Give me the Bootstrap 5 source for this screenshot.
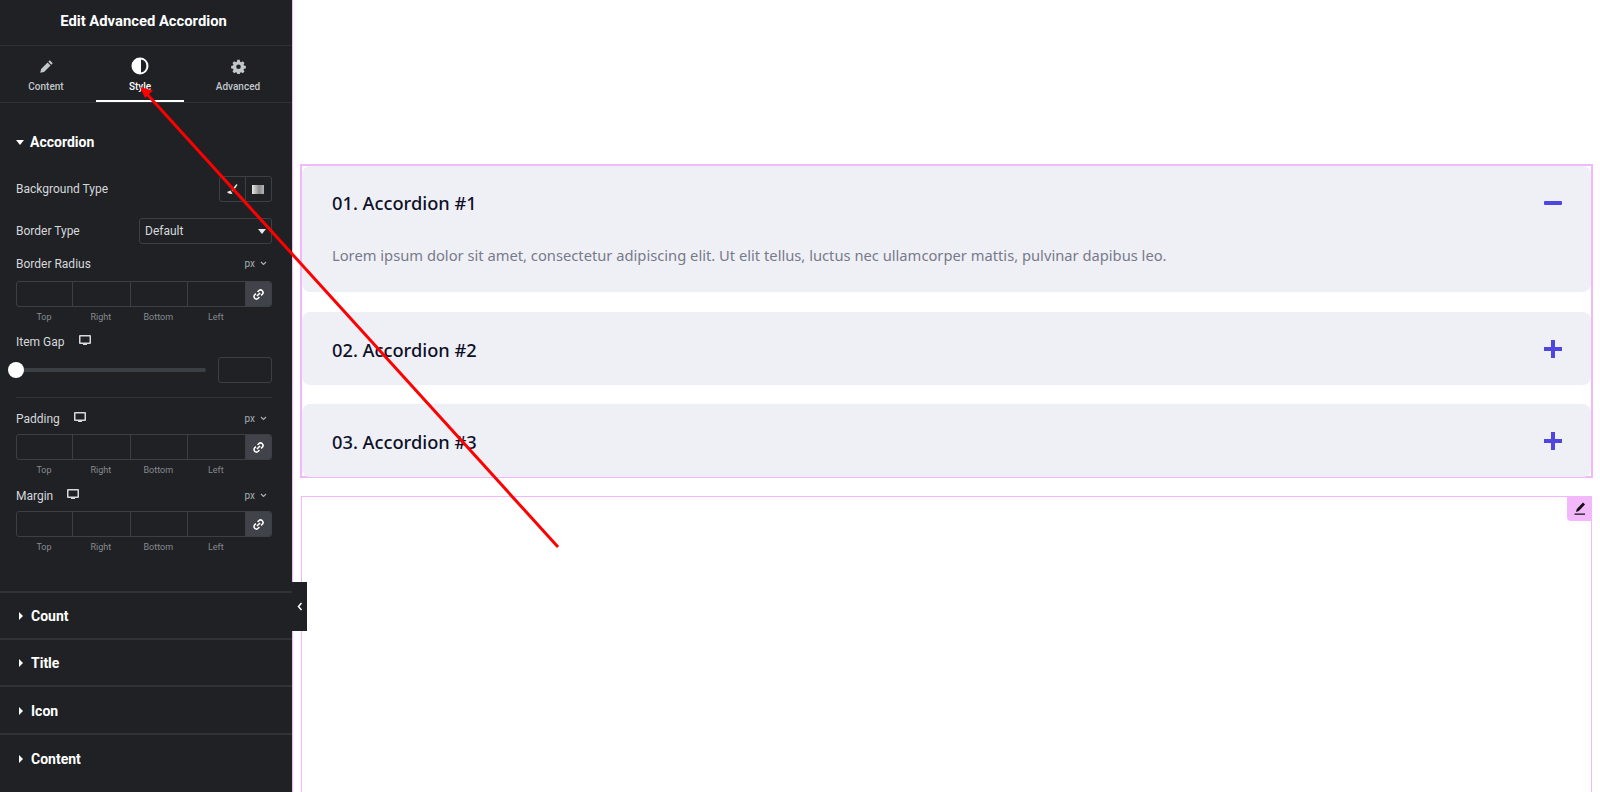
<!DOCTYPE html>
<html lang="en"><head><meta charset="utf-8"><title>Edit Advanced Accordion</title>
<link rel="stylesheet" href="https://cdn.jsdelivr.net/npm/bootstrap@5.3.0/dist/css/bootstrap.min.css">
<style>
html,body{height:792px;overflow:hidden;background:#fff}
body{font-family:Roboto,"Liberation Sans",sans-serif}
.side{width:292px;height:792px;background:#1f2124;color:#d5d8dc;flex:none}
.side-head{height:46px;border-bottom:1px solid #2e3034;font-size:14.8px;font-weight:700;color:#fff;padding:12px 5px 0 0;line-height:18px;text-align:center}
.side-tabs{height:57px;border-bottom:1px solid #303236}
.side-tab{padding-top:11px;text-align:center;font-size:10px;font-weight:500;color:#c2c7cc;line-height:12px;height:56px}
.side-tab.t1{width:92px}
.side-tab.t3{width:108px}
.side-tab svg{display:block;margin:0 auto 6px;height:18px;width:18px;fill:currentColor}
.side-tab.t1 svg,.side-tab.t3 svg{height:15px;width:15px;margin:2px auto 7px}
.side-tab.on{color:#fff;border-bottom:2px solid #fff;width:88px;margin-left:4px}
.sec-open{height:490px;padding:0 20px 0 16px;border-bottom:2px solid #303236;font-size:12px;color:#d5d8dc}
.sec-title{font-size:14px;font-weight:700;color:#fff;line-height:18px}
.sec-open>.sec-title{padding-top:30px;height:55px;margin-bottom:18px}
.caret-d{width:0;height:0;border:4px solid transparent;border-top:5px solid #fff;border-bottom:0;margin:0 6px 0 0;display:inline-block;vertical-align:2px}
.caret-r{width:0;height:0;border:4px solid transparent;border-left:4.5px solid #fff;border-right:0;margin:0 8px 0 3px;display:inline-block;vertical-align:1px}
.ctl-row{height:26px;margin-bottom:16px}
.ctl-row.tight{margin-bottom:12px}
.seg{width:53px;height:26px;border:1px solid #3c3f44;border-radius:3px}
.seg span{width:50%;height:100%}
.seg span:first-child{border-right:1px solid #3c3f44}
.sel{width:133px;height:26px;border:1px solid #3c3f44;border-radius:3px;padding-left:5px;font-size:12px;color:#d5d8dc;line-height:24px;position:relative}
.sel i{position:absolute;right:5px;top:10px;border:4.5px solid transparent;border-top:5px solid #e6e8ea;border-bottom:0}
.lab-row{height:16px;line-height:16px}
.lab-row.nudge{margin-top:1px}
.unit{font-size:10px;color:#a4afb7;padding-right:5px}
.unit svg{width:7px;height:5px;margin-left:5px;vertical-align:1px}
.dims{height:26px;border:1px solid #3c3f44;border-radius:3px;margin-top:7px;width:256px;overflow:hidden}
.dims.d1{margin-top:9px}
.dims span{border-right:1px solid #3c3f44;width:57.5px;flex:none}
.dims span:first-child{width:56px}
.dims b{flex:1;background:#404349;font-weight:400}
.dim-labs{font-size:9px;color:#868a8f;width:229px;height:27px;line-height:18px;text-align:center;padding-top:1px}
.dim-labs span{width:57.5px;flex:none}
.dim-labs span:first-child{width:56px}
.dsk{width:12px;height:11px;margin-left:14px;fill:#d5d8dc;vertical-align:0}
.slide-row{margin-top:7px;height:26px}
.track{height:4px;width:190px;background:#3c3f44;border-radius:2px}
.thumb{width:16px;height:16px;border-radius:50%;background:#fff;position:absolute;left:-8px;top:-6px}
.gap-in{width:54px;height:26px;border:1px solid #3c3f44;border-radius:3px}
.rule{height:1px;background:#303236;margin:14px 0 13px}
.sec-shut{height:47px;border-bottom:2px solid #303236;padding:14px 0 0 16px}
.sec-shut.s3{height:48px;padding-top:15px}
.sec-shut.s4{padding-top:15px;border-bottom:0}
.stage{flex:1;height:792px;border-left:1px solid #f3b7fb;padding:164px 7px 0 7px;position:relative;min-width:0}
.acc-box{border:2px solid #f3b7fb;height:314px;margin-bottom:18px}
.acc-item{background:#eff0f6;border-radius:8px;height:73px;margin-bottom:19px;padding:0 29px 0 30px}
.acc-item:last-child{margin-bottom:0}
.acc-item.open{height:126px;margin-bottom:20px}
.acc-head{height:73px;font-family:"Noto Sans",sans-serif;font-size:18.25px;font-weight:500;color:#0e1027}
.acc-head span{padding-top:3px}
.open .acc-head span{padding-top:1px}
.acc-body{font-family:"Noto Sans",sans-serif;font-size:14.73px;line-height:24px;color:#777a8a;margin-top:4px}
.acc-sign{width:18px;height:18px;fill:#4f46e0}
.frame2{border:1px solid #f3b7fb;border-bottom:0;height:296px;position:relative;margin:0 1px}
.pen-tab{position:absolute;right:0;top:-1px;width:24px;height:25px;background:#f3b7fb;border-bottom-left-radius:4px}
.pen-tab svg{width:13px;height:13px}
.toggle{position:absolute;left:292px;top:582px;width:15px;height:49px;background:#1f2124;z-index:5}
.toggle svg{width:6px;height:9px}
.arrow{position:absolute;left:0;top:0;width:1600px;height:792px;z-index:9;pointer-events:none}
</style></head>
<body class="d-flex">
<aside class="side">
  <div class="side-head">Edit Advanced Accordion</div>
  <div class="side-tabs d-flex">
    <div class="side-tab t1"><svg viewBox="0 0 18 18"><path d="M13 1.500l3.500 3.500-1.800 1.800-3.500-3.500zM10.300 4.200l3.500 3.500-7.800 7.800-4.500 1 1-4.500z"/></svg>Content</div>
    <div class="side-tab on"><svg viewBox="0 0 18 18"><path fill-rule="evenodd" d="M9 .5a8.500 8.500 0 1 1 0 17 8.500 8.500 0 0 1 0-17zm1 2.100v12.800a6.500 6.500 0 0 0 0-12.800z"/></svg>Style</div>
    <div class="side-tab t3"><svg viewBox="0 0 18 18"><path fill-rule="evenodd" d="M7.500 1h3l.4 2.200 1.300.6 1.900-1.200 2.100 2.100-1.200 1.900.6 1.300 2.200.4v3l-2.200.4-.6 1.300 1.200 1.900-2.100 2.100-1.900-1.200-1.300.6-.4 2.200h-3l-.4-2.200-1.300-.6-1.900 1.200-2.100-2.100 1.200-1.900-.6-1.300-2.200-.4v-3l2.200-.4.6-1.300-1.200-1.900 2.100-2.100 1.900 1.200 1.300-.6zM9 6.500a2.800 2.800 0 1 0 0 5.600 2.800 2.800 0 0 0 0-5.600z"/></svg>Advanced</div>
  </div>
  <div class="sec-open">
    <div class="sec-title"><i class="caret-d"></i>Accordion</div>
    <div class="ctl-row d-flex justify-content-between align-items-center">
      <span>Background Type</span>
      <div class="seg d-flex"><span class="d-flex align-items-center justify-content-center"><svg width="12" height="12" viewBox="0 0 12 12"><path fill="#e6e8ea" d="M10.500 1L5.500 7 7 8.500 11.500 2zM4.500 7.500L1 9c1 1.500 3.500 2.200 5.500 1.800z"/></svg></span><span class="d-flex align-items-center justify-content-center"><svg width="12" height="9" viewBox="0 0 12 9"><defs><linearGradient id="g"><stop offset="0" stop-color="#e8e8e8"/><stop offset=".6" stop-color="#8a8a8a"/><stop offset="1" stop-color="#b5b5b5"/></linearGradient></defs><rect width="12" height="9" fill="url(#g)"/></svg></span></div>
    </div>
    <div class="ctl-row tight d-flex justify-content-between align-items-center">
      <span>Border Type</span><div class="sel">Default<i></i></div>
    </div>
    <div class="lab-row d-flex justify-content-between"><span>Border Radius</span><span class="unit">px<svg viewBox="0 0 7 5"><path d="M1 1l2.500 2.500L6 1" fill="none" stroke="#a4afb7" stroke-width="1.200"/></svg></span></div>
    <div class="dims d1 d-flex"><span></span><span></span><span></span><span></span><b class="d-flex align-items-center justify-content-center"><svg width="11" height="11" viewBox="0 0 12 12"><g fill="none" stroke="#fff" stroke-width="1.700"><path d="M5 3.200l1.300-1.300a2.400 2.400 0 0 1 3.800 3.800L8.800 7"/><path d="M7 8.800l-1.300 1.300a2.400 2.400 0 0 1-3.800-3.800L3.200 5"/><path d="M4.300 7.700l3.400-3.400"/></g></svg></b></div>
    <div class="dim-labs d-flex"><span>Top</span><span>Right</span><span>Bottom</span><span>Left</span></div>
    <div class="lab-row">Item Gap<svg class="dsk" viewBox="0 0 12 11"><path fill-rule="evenodd" d="M1 0h10a1 1 0 0 1 1 1v7a1 1 0 0 1-1 1H8v1H4V9H1a1 1 0 0 1-1-1V1a1 1 0 0 1 1-1zm.5 1.500v6h9v-6z"/></svg></div>
    <div class="slide-row d-flex justify-content-between align-items-center">
      <div class="track position-relative"><div class="thumb"></div></div><div class="gap-in"></div>
    </div>
    <div class="rule"></div>
    <div class="lab-row d-flex justify-content-between"><span>Padding<svg class="dsk" viewBox="0 0 12 11"><path fill-rule="evenodd" d="M1 0h10a1 1 0 0 1 1 1v7a1 1 0 0 1-1 1H8v1H4V9H1a1 1 0 0 1-1-1V1a1 1 0 0 1 1-1zm.5 1.500v6h9v-6z"/></svg></span><span class="unit">px<svg viewBox="0 0 7 5"><path d="M1 1l2.500 2.500L6 1" fill="none" stroke="#a4afb7" stroke-width="1.200"/></svg></span></div>
    <div class="dims d-flex"><span></span><span></span><span></span><span></span><b class="d-flex align-items-center justify-content-center"><svg width="11" height="11" viewBox="0 0 12 12"><g fill="none" stroke="#fff" stroke-width="1.700"><path d="M5 3.200l1.300-1.300a2.400 2.400 0 0 1 3.800 3.800L8.800 7"/><path d="M7 8.800l-1.300 1.300a2.400 2.400 0 0 1-3.800-3.800L3.200 5"/><path d="M4.300 7.700l3.400-3.400"/></g></svg></b></div>
    <div class="dim-labs d-flex"><span>Top</span><span>Right</span><span>Bottom</span><span>Left</span></div>
    <div class="lab-row nudge d-flex justify-content-between"><span>Margin<svg class="dsk" viewBox="0 0 12 11"><path fill-rule="evenodd" d="M1 0h10a1 1 0 0 1 1 1v7a1 1 0 0 1-1 1H8v1H4V9H1a1 1 0 0 1-1-1V1a1 1 0 0 1 1-1zm.5 1.500v6h9v-6z"/></svg></span><span class="unit">px<svg viewBox="0 0 7 5"><path d="M1 1l2.500 2.500L6 1" fill="none" stroke="#a4afb7" stroke-width="1.200"/></svg></span></div>
    <div class="dims d-flex"><span></span><span></span><span></span><span></span><b class="d-flex align-items-center justify-content-center"><svg width="11" height="11" viewBox="0 0 12 12"><g fill="none" stroke="#fff" stroke-width="1.700"><path d="M5 3.200l1.300-1.300a2.400 2.400 0 0 1 3.800 3.800L8.800 7"/><path d="M7 8.800l-1.300 1.300a2.400 2.400 0 0 1-3.800-3.800L3.200 5"/><path d="M4.300 7.700l3.400-3.400"/></g></svg></b></div>
    <div class="dim-labs d-flex"><span>Top</span><span>Right</span><span>Bottom</span><span>Left</span></div>
  </div>
  <div class="sec-shut sec-title"><i class="caret-r"></i>Count</div>
  <div class="sec-shut sec-title"><i class="caret-r"></i>Title</div>
  <div class="sec-shut s3 sec-title"><i class="caret-r"></i>Icon</div>
  <div class="sec-shut s4 sec-title"><i class="caret-r"></i>Content</div>
</aside>
<div class="toggle d-flex align-items-center justify-content-center"><svg viewBox="0 0 6 9"><path d="M4.500 1L1.500 4.500 4.500 8" fill="none" stroke="#fff" stroke-width="1.500"/></svg></div>
<main class="stage">
  <div class="acc-box">
    <div class="acc-item open">
      <div class="acc-head d-flex justify-content-between align-items-center"><span>01. Accordion #1</span><svg class="acc-sign" viewBox="0 0 18 18"><rect y="7" width="18" height="4" rx="1"/></svg></div>
      <div class="acc-body">Lorem ipsum dolor sit amet, consectetur adipiscing elit. Ut elit tellus, luctus nec ullamcorper mattis, pulvinar dapibus leo.</div>
    </div>
    <div class="acc-item"><div class="acc-head d-flex justify-content-between align-items-center"><span>02. Accordion #2</span><svg class="acc-sign" viewBox="0 0 18 18"><path d="M7 0h4v7h7v4h-7v7H7v-7H0V7h7z"/></svg></div></div>
    <div class="acc-item"><div class="acc-head d-flex justify-content-between align-items-center"><span>03. Accordion #3</span><svg class="acc-sign" viewBox="0 0 18 18"><path d="M7 0h4v7h7v4h-7v7H7v-7H0V7h7z"/></svg></div></div>
  </div>
  <div class="frame2"><div class="pen-tab d-flex align-items-center justify-content-center"><svg viewBox="0 0 13 13"><path fill="#111" d="M10 .5l2 2-6.200 6.500-2.800 1 .8-3zM1.500 11.600h10.500v1.100H1.500z"/></svg></div></div>
</main>
<svg class="arrow" viewBox="0 0 1600 792"><path d="M558 547L146 93" stroke="#f00" stroke-width="3" fill="none"/><path d="M140 87l13 3.500-8 7.500z" fill="#f00"/></svg>
</body></html>
